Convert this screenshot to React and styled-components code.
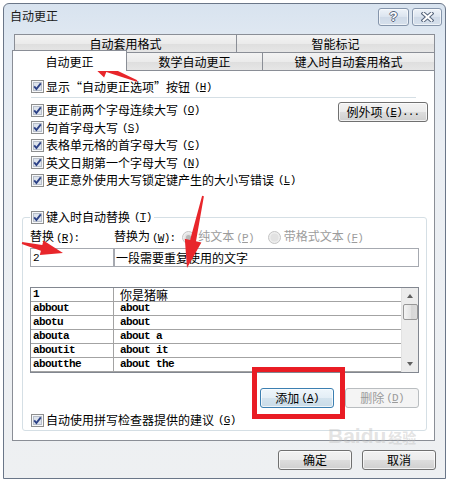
import React from "react";
import styled, { createGlobalStyle, css } from "styled-components";

const GlobalStyle = createGlobalStyle`
  html, body {
    margin: 0;
    padding: 0;
    background: #fff;
  }
  body {
    font-family: "Noto Sans CJK SC", "Noto Sans", sans-serif;
    font-size: 12px;
    color: #000;
  }
  * {
    box-sizing: border-box;
  }
`;

const Page = styled.div`
  position: relative;
  width: 449px;
  height: 483px;
  overflow: hidden;
`;

const Window = styled.div`
  margin: 3px 0 0 3px;
  width: 443px;
  height: 476px;
  border: 1px solid #6a7688;
  border-radius: 6px 6px 0 0;
  background: linear-gradient(#d8e3ef 0px, #e1e9f2 40px, #eaeef3 140px, #eef0f2 100%);
  display: flex;
  flex-direction: column;
`;

const TitleBar = styled.div`
  height: 24px;
  display: flex;
  align-items: center;
  padding: 0 3px 0 6px;
`;

const Title = styled.span`
  font-size: 12px;
  color: #1a1a1a;
  line-height: 16px;
`;

const CaptionButtons = styled.div`
  margin-left: auto;
  display: flex;
  gap: 3px;
  margin-top: 1px;
`;

const CaptionButton = styled.div`
  width: ${p => p.$w}px;
  height: 18px;
  border: 1px solid #8595ab;
  border-radius: 3px;
  background: linear-gradient(#eef3f9, #dbe4ef 50%, #cfdae8 51%, #d6e0ec);
  box-shadow: inset 0 0 0 1px rgba(255, 255, 255, 0.6);
  display: flex;
  align-items: center;
  justify-content: center;
`;

const HelpGlyph = styled.span`
  font-family: "Liberation Sans", sans-serif;
  font-weight: bold;
  font-size: 13px;
  line-height: 13px;
  color: #fff;
  text-shadow: 1px 0 0 #56657c, -1px 0 0 #56657c, 0 1px 0 #56657c, 0 -1px 0 #56657c;
`;

const Body = styled.div`
  padding: 6px 9px 0 8px;
  display: flex;
  flex-direction: column;
`;

const TabRow = styled.div`
  display: flex;
  align-items: flex-start;
  height: 18px;
  margin-left: ${p => (p.$back ? 2 : 0)}px;
`;

const Tab = styled.div`
  flex: none;
  width: ${p => p.$w}px;
  height: 18px;
  margin-left: ${p => (p.$first ? 0 : -1)}px;
  border: 1px solid #8a8e96;
  border-bottom: 0;
  background: linear-gradient(#f3f3f3, #ebebeb 50%, #dedede 51%, #e6e6e6);
  display: flex;
  align-items: center;
  justify-content: center;
  font-size: 12px;
  line-height: 16px;
  ${p =>
    p.$active &&
    css`
      position: relative;
      z-index: 2;
      height: 21px;
      margin-top: -2px;
      background: #fff;
      padding-top: 2px;
    `}
`;

const Panel = styled.div`
  width: 423px;
  height: 371px;
  border: 1px solid #8a8e96;
  background: #fff;
  padding-top: 7px;
  display: flex;
  flex-direction: column;
`;

const CheckRow = styled.div`
  display: flex;
  align-items: center;
  gap: 2px;
  height: ${p => p.$h || 17}px;
  padding-left: ${p => (p.$indent === undefined ? 18 : p.$indent)}px;
  margin-top: ${p => p.$mt || 0}px;
  white-space: nowrap;
  line-height: 16px;
`;

const Key = styled.span`
  font-family: "Liberation Mono", monospace;
  font-size: 11px;
  letter-spacing: -0.8px;
  margin-left: 2px;
  color: inherit;
  u {
    text-decoration: underline;
  }
`;

const Separator = styled.div`
  height: 1px;
  background: #d5dfe5;
  margin: 2px 18px 0 18px;
`;

const Options = styled.div`
  display: flex;
  justify-content: space-between;
  align-items: flex-start;
  margin-top: 3.5px;
  padding-right: 6px;
`;

const OptionList = styled.div`
  display: flex;
  flex-direction: column;
`;

const Button = styled.div`
  flex: none;
  width: ${p => p.$w || 74}px;
  height: 20px;
  margin-top: ${p => p.$mt || 0}px;
  border: 1px solid #707070;
  border-radius: 3px;
  background: linear-gradient(#f2f2f2 0%, #ebebeb 50%, #dddddd 51%, #cfcfcf 100%);
  box-shadow: inset 0 0 0 1px rgba(255, 255, 255, 0.7);
  display: flex;
  align-items: center;
  justify-content: center;
  font-size: 12px;
  line-height: 16px;
  color: #000;
  white-space: nowrap;
  ${p =>
    p.$default &&
    css`
      border-color: #3c7fb1;
      background: linear-gradient(#eef6fb 0%, #e3eef6 50%, #d3e3ee 51%, #c9dbe7 100%);
    `}
  ${p =>
    p.$disabled &&
    css`
      border-color: #b9bdc0;
      background: #f4f4f4;
      color: #9a9a9a;
      box-shadow: none;
    `}
`;

const Group = styled.fieldset`
  width: 405px;
  margin: 19.5px 0 0 9px;
  padding: 0 7px 1.5px 7px;
  border: 1px solid #d5dfe5;
  border-radius: 3px;
  min-width: 0;
`;

const Legend = styled.legend`
  padding: 0 3px 0 1px;
  margin: 0;
  height: 17px;
  display: flex;
  align-items: center;
  gap: 2px;
  line-height: 16px;
  white-space: nowrap;
`;

const LabelRow = styled.div`
  display: flex;
  align-items: center;
  height: 16px;
  margin-top: 3.5px;
  white-space: nowrap;
  line-height: 16px;
`;

const FieldLabel = styled.span`
  flex: none;
  width: ${p => (p.$w ? `${p.$w}px` : "auto")};
  margin-right: ${p => p.$mr || 0}px;
`;

const RadioOption = styled.span`
  display: flex;
  align-items: center;
  gap: 3px;
  color: #9c9c9c;
  margin-right: ${p => p.$mr || 0}px;
`;

const InputRow = styled.div`
  display: flex;
  margin-top: 3px;
`;

const TextBox = styled.div`
  flex: none;
  width: ${p => p.$w}px;
  height: 19px;
  border: 1px solid #a6a9b0;
  padding-left: ${p => p.$pl || 2}px;
  display: flex;
  align-items: center;
  background: #fff;
  white-space: nowrap;
  line-height: 16px;
`;

const Mono = styled.span`
  font-family: "Liberation Mono", monospace;
  font-size: 11px;
  letter-spacing: -0.6px;
  font-weight: ${p => (p.$bold ? "bold" : "normal")};
`;

const ListBox = styled.div`
  margin-top: 20px;
  width: 389px;
  height: 86px;
  border: 1px solid #828790;
  display: flex;
  background: #fff;
`;

const ListRows = styled.div`
  width: 370px;
  display: flex;
  flex-direction: column;
`;

const ListRow = styled.div`
  display: grid;
  grid-template-columns: 83px 287px;
  height: 14px;
  border-bottom: 1px solid #a3a3a3;
`;

const Cell = styled.div`
  padding-left: ${p => p.$pl}px;
  display: flex;
  align-items: center;
  line-height: 13px;
  white-space: nowrap;
  ${p =>
    p.$divider &&
    css`
      border-right: 1px solid #a3a3a3;
    `}
`;

const ScrollBar = styled.div`
  width: 17px;
  background: #ececec;
  border-left: 1px solid #e2e2e2;
  display: flex;
  flex-direction: column;
  align-items: center;
`;

const ScrollArrow = styled.div`
  width: 16px;
  height: 16px;
  display: flex;
  align-items: center;
  justify-content: center;
  &::after {
    content: "";
    border-left: 3.5px solid transparent;
    border-right: 3.5px solid transparent;
    ${p =>
      p.$down
        ? css`
            border-top: 4px solid #606060;
          `
        : css`
            border-bottom: 4px solid #606060;
          `}
  }
`;

const ScrollThumb = styled.div`
  width: 15px;
  height: 16px;
  border: 1px solid #979797;
  border-radius: 2px;
  background: linear-gradient(90deg, #f4f4f4, #e4e4e4 50%, #d6d6d6 51%, #dcdcdc);
`;

const ScrollSpace = styled.div`
  flex: 1;
`;

const ActionRow = styled.div`
  display: flex;
  justify-content: flex-end;
  gap: 11px;
  margin-top: 15px;
`;

const Footer = styled.div`
  display: flex;
  justify-content: flex-end;
  gap: 10px;
  margin-top: 9px;
`;

const Annotation = styled.div`
  position: absolute;
  left: 252px;
  top: 367px;
  width: 93px;
  height: 52px;
  border: 5px solid #e91c24;
  pointer-events: none;
`;

const Watermark = styled.div`
  position: absolute;
  left: 328px;
  top: 424px;
  display: flex;
  align-items: baseline;
  gap: 2px;
  color: rgba(185, 185, 185, 0.4);
  pointer-events: none;
  span:first-child {
    font-family: "Liberation Sans", sans-serif;
    font-weight: bold;
    font-size: 21px;
    line-height: 24px;
  }
  span:last-child {
    font-size: 14px;
    font-weight: bold;
    line-height: 18px;
  }
`;

const Overlay = styled.svg`
  position: absolute;
  left: 0;
  top: 0;
  pointer-events: none;
`;

const CheckBox = () => (
  <svg width="13" height="13" viewBox="0 0 13 13" style={{ flex: "none" }}>
    <rect x="0.5" y="0.5" width="12" height="12" fill="#f6f7f9" stroke="#8e8f8f" />
    <rect x="2.5" y="2.5" width="8" height="8" fill="#dde3ec" stroke="#b7bec9" />
    <path d="M3.2 6.4 L5.4 9 L9.8 3.4" stroke="#2d4287" strokeWidth="1.9" fill="none" />
  </svg>
);

const Radio = ({ checked }) => (
  <svg width="13" height="13" viewBox="0 0 13 13" style={{ flex: "none" }}>
    <circle cx="6.5" cy="6.5" r="6" fill="#eeeeee" stroke="#c4c4c4" />
    <circle cx="6.5" cy="6.5" r="4" fill="#e2e2e2" />
    {checked && <circle cx="6.5" cy="6.5" r="2.6" fill="#b8b8b8" />}
  </svg>
);

const CloseGlyph = () => (
  <svg width="13" height="10" viewBox="0 0 13 10">
    <path d="M2.5 1.5 L10.5 8.5 M10.5 1.5 L2.5 8.5" stroke="#56657c" strokeWidth="4" strokeLinecap="square" />
    <path d="M2.5 1.5 L10.5 8.5 M10.5 1.5 L2.5 8.5" stroke="#fff" strokeWidth="2" strokeLinecap="square" />
  </svg>
);

function arrowPoints([x1, y1], [x2, y2], len, half, s0, s1) {
  const dx = x2 - x1;
  const dy = y2 - y1;
  const d = Math.hypot(dx, dy);
  const ux = dx / d;
  const uy = dy / d;
  const nx = -uy;
  const ny = ux;
  const bx = x2 - ux * len;
  const by = y2 - uy * len;
  const pts = [
    [x1 + nx * s0, y1 + ny * s0],
    [bx + nx * s1, by + ny * s1],
    [bx + nx * half, by + ny * half],
    [x2, y2],
    [bx - nx * half, by - ny * half],
    [bx - nx * s1, by - ny * s1],
    [x1 - nx * s0, y1 - ny * s0],
  ];
  return pts.map(p => p.map(v => v.toFixed(1)).join(",")).join(" ");
}

const arrows = [
  { from: [137, 81], to: [87, 61], len: 22, half: 9 },
  { from: [22, 243], to: [63, 253], len: 22, half: 7.5 },
  { from: [203, 196], to: [187, 268], len: 28, half: 8.5 },
];

const options = [
  ["更正前两个字母连续大写", "O"],
  ["句首字母大写", "S"],
  ["表格单元格的首字母大写", "C"],
  ["英文日期第一个字母大写", "N"],
  ["更正意外使用大写锁定键产生的大小写错误", "L"],
];

const entries = [
  ["1", "你是猪嘛", true],
  ["abbout", "about"],
  ["abotu", "about"],
  ["abouta", "about a"],
  ["aboutit", "about it"],
  ["aboutthe", "about the"],
];

const K = ({ k, suffix }) => (
  <Key>
    (<u>{k}</u>){suffix}
  </Key>
);

export default function App() {
  return (
    <Page>
      <GlobalStyle />
      <Window>
        <TitleBar>
          <Title>自动更正</Title>
          <CaptionButtons>
            <CaptionButton $w={31}>
              <HelpGlyph>?</HelpGlyph>
            </CaptionButton>
            <CaptionButton $w={30}>
              <CloseGlyph />
            </CaptionButton>
          </CaptionButtons>
        </TitleBar>
        <Body>
          <TabRow $back>
            <Tab $w={223} $first>自动套用格式</Tab>
            <Tab $w={199}>智能标记</Tab>
          </TabRow>
          <TabRow>
            <Tab $w={115} $first $active>自动更正</Tab>
            <Tab $w={137}>数学自动更正</Tab>
            <Tab $w={173}>键入时自动套用格式</Tab>
          </TabRow>
          <Panel>
            <CheckRow>
              <CheckBox />
              <span>显示“自动更正选项”按钮</span>
              <K k="H" />
            </CheckRow>
            <Separator />
            <Options>
              <OptionList>
                {options.map(([label, k]) => (
                  <CheckRow key={k} $h={17.5}>
                    <CheckBox />
                    <span>{label}</span>
                    <K k={k} />
                  </CheckRow>
                ))}
              </OptionList>
              <Button $w={90} $mt={0.5}>
                例外项<K k="E" suffix="..." />
              </Button>
            </Options>
            <Group>
              <Legend>
                <CheckBox />
                <span>键入时自动替换</span>
                <K k="T" />
              </Legend>
              <LabelRow>
                <FieldLabel $w={84}>
                  替换<K k="R" suffix=":" />
                </FieldLabel>
                <FieldLabel $mr={7}>
                  替换为<K k="W" suffix=":" />
                </FieldLabel>
                <RadioOption $mr={14}>
                  <Radio checked />
                  <span>
                    纯文本<K k="P" />
                  </span>
                </RadioOption>
                <RadioOption>
                  <Radio />
                  <span>
                    带格式文本<K k="F" />
                  </span>
                </RadioOption>
              </LabelRow>
              <InputRow>
                <TextBox $w={84} $pl={2}>
                  <Mono>2</Mono>
                </TextBox>
                <TextBox $w={305} $pl={1}>
                  一段需要重复使用的文字
                </TextBox>
              </InputRow>
              <ListBox>
                <ListRows>
                  {entries.map(([name, value, cjk]) => (
                    <ListRow key={name}>
                      <Cell $pl={2} $divider>
                        <Mono $bold>{name}</Mono>
                      </Cell>
                      <Cell $pl={6}>{cjk ? value : <Mono $bold>{value}</Mono>}</Cell>
                    </ListRow>
                  ))}
                </ListRows>
                <ScrollBar>
                  <ScrollArrow />
                  <ScrollThumb />
                  <ScrollSpace />
                  <ScrollArrow $down />
                </ScrollBar>
              </ListBox>
              <ActionRow>
                <Button $default>
                  添加<K k="A" />
                </Button>
                <Button $disabled>
                  删除<K k="D" />
                </Button>
              </ActionRow>
              <CheckRow $indent={1} $mt={3.5}>
                <CheckBox />
                <span>自动使用拼写检查器提供的建议</span>
                <K k="G" />
              </CheckRow>
            </Group>
          </Panel>
          <Footer>
            <Button>确定</Button>
            <Button>取消</Button>
          </Footer>
        </Body>
      </Window>
      <Watermark>
        <span>Baidu</span>
        <span>经验</span>
      </Watermark>
      <Annotation />
      <Overlay width="449" height="483" viewBox="0 0 449 483">
        {arrows.map((a, i) => (
          <polygon key={i} points={arrowPoints(a.from, a.to, a.len, a.half, 0.9, 3)} fill="#e8262b" />
        ))}
      </Overlay>
    </Page>
  );
}
